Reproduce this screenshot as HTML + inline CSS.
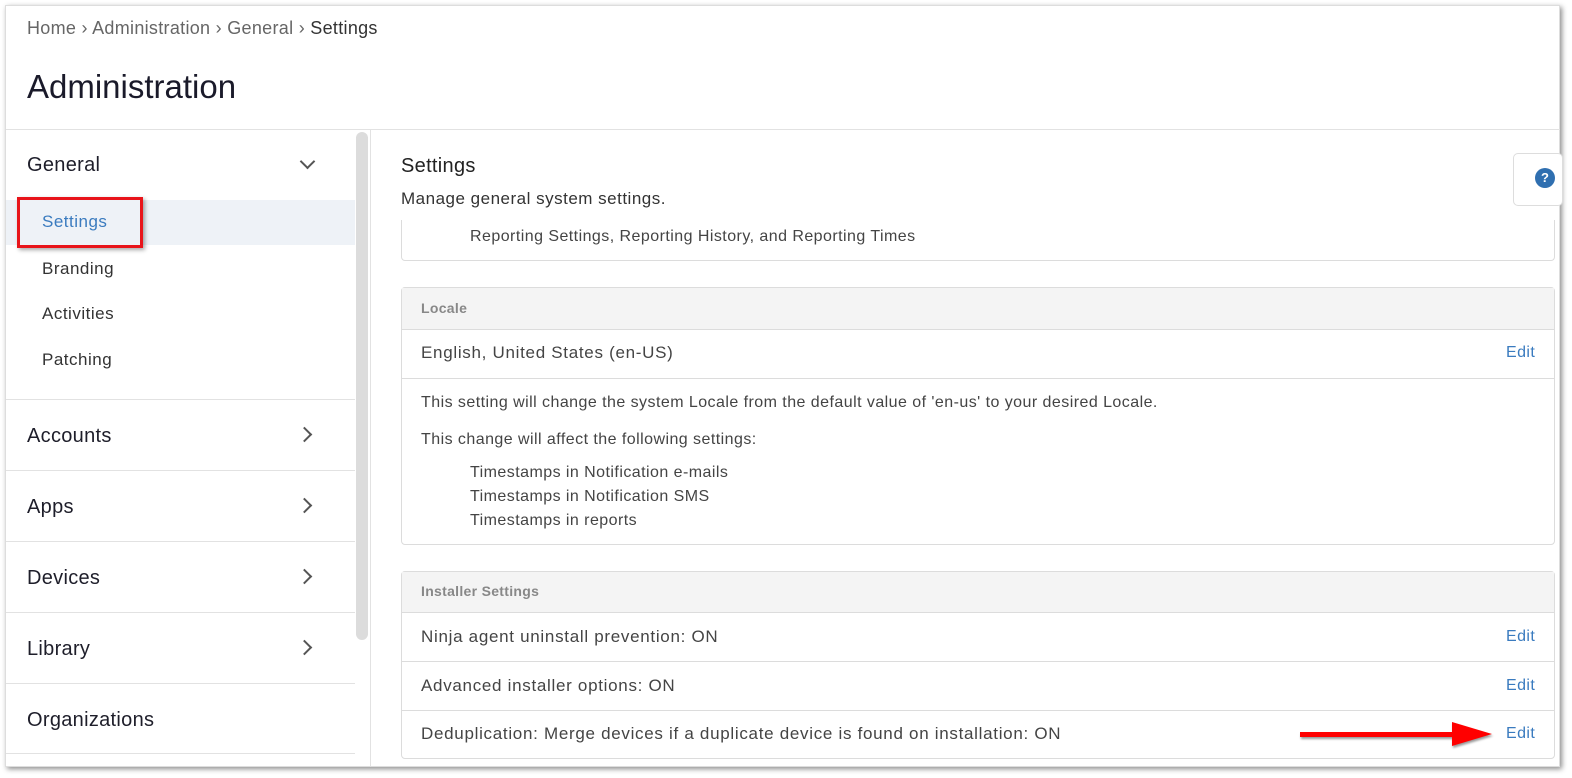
<!DOCTYPE html>
<html><head><style>
*{margin:0;padding:0;box-sizing:border-box}
body{width:1572px;height:778px;background:#fff;position:relative;overflow:hidden;font-family:"Liberation Sans",sans-serif;color:#222}
.a{position:absolute;white-space:nowrap}
.frame{position:absolute;left:5px;top:5px;width:1555px;height:762px;background:#fff;box-shadow:2px 2px 5px rgba(0,0,0,.45);border:1px solid #ddd}
.hl{position:absolute;height:1px;background:#e2e2e2}
.nav{font-size:20px;color:#1e1e2a;letter-spacing:0.3px}
.sub{font-size:17px;color:#333;letter-spacing:0.5px}
.chev{position:absolute;width:11px;height:11px;border-right:2px solid #555;border-bottom:2px solid #555}
.card{position:absolute;left:401px;width:1154px;border:1px solid #dcdcdc;border-radius:4px;background:#fff}
.t{font-size:17px;color:#444;letter-spacing:0.7px}
.s{font-size:16px;color:#444;letter-spacing:0.45px}
.edit{font-size:16px;color:#3a7bbf;letter-spacing:0.4px}
</style></head><body>
<div class="frame"></div>
<div class="a" style="left:27px;top:18px;font-size:18px;color:#666;letter-spacing:0.3px">Home › Administration › General › <span style="color:#333">Settings</span></div>
<div class="a" style="left:27px;top:68px;font-size:33px;color:#1a1a2a">Administration</div>
<div class="hl" style="left:6px;top:129px;width:1554px"></div>

<!-- sidebar -->
<div style="position:absolute;left:6px;top:200px;width:349px;height:45px;background:#eef2f7"></div>
<div style="position:absolute;left:356px;top:132px;width:12px;height:508px;background:#dcdcdc;border-radius:6px"></div>
<div style="position:absolute;left:370px;top:130px;width:1px;height:636px;background:#e2e2e2"></div>
<div class="a nav" style="left:27px;top:154px">General</div>
<div class="chev" style="left:302px;top:156px;transform:rotate(45deg)"></div>
<div class="a sub" style="left:42px;top:212px;color:#3a7bbf">Settings</div>
<div style="position:absolute;left:17px;top:197px;width:126px;height:51px;border:3px solid #e8141a;box-shadow:2px 2px 4px rgba(0,0,0,.35)"></div>
<div class="a sub" style="left:42px;top:259px">Branding</div>
<div class="a sub" style="left:42px;top:304px">Activities</div>
<div class="a sub" style="left:42px;top:350px">Patching</div>
<div class="hl" style="left:6px;top:399px;width:349px"></div>
<div class="a nav" style="left:27px;top:425px">Accounts</div><div class="chev" style="left:299px;top:429px;transform:rotate(-45deg)"></div>
<div class="hl" style="left:6px;top:470px;width:349px"></div>
<div class="a nav" style="left:27px;top:496px">Apps</div><div class="chev" style="left:299px;top:500px;transform:rotate(-45deg)"></div>
<div class="hl" style="left:6px;top:541px;width:349px"></div>
<div class="a nav" style="left:27px;top:567px">Devices</div><div class="chev" style="left:299px;top:571px;transform:rotate(-45deg)"></div>
<div class="hl" style="left:6px;top:612px;width:349px"></div>
<div class="a nav" style="left:27px;top:638px">Library</div><div class="chev" style="left:299px;top:642px;transform:rotate(-45deg)"></div>
<div class="hl" style="left:6px;top:683px;width:349px"></div>
<div class="a nav" style="left:27px;top:709px">Organizations</div>
<div class="hl" style="left:6px;top:753px;width:349px"></div>

<!-- main -->
<div class="a" style="left:401px;top:155px;font-size:20px;color:#222;letter-spacing:0.3px">Settings</div>
<div class="a" style="left:401px;top:189px;font-size:17px;color:#333;letter-spacing:0.5px">Manage general system settings.</div>
<div style="position:absolute;left:1513px;top:153px;width:50px;height:53px;border:1px solid #ddd;border-radius:5px;background:#fff"></div>
<div style="position:absolute;left:1535px;top:168px;width:20px;height:20px;border-radius:50%;background:#2f6fb0;color:#fff;font-weight:bold;font-size:13px;text-align:center;line-height:20px">?</div>

<div class="card" style="top:220px;height:41px;border-top:none;border-radius:0 0 4px 4px"></div>
<div class="a s" style="left:470px;top:228px">Reporting Settings, Reporting History, and Reporting Times</div>

<div class="card" style="top:287px;height:258px"></div>
<div style="position:absolute;left:402px;top:288px;width:1152px;height:42px;background:#f4f4f4;border-bottom:1px solid #dcdcdc"></div>
<div class="a" style="left:421px;top:300px;font-size:14px;font-weight:bold;color:#888;letter-spacing:0.3px">Locale</div>
<div class="a t" style="left:421px;top:343px">English, United States (en-US)</div>
<div class="a edit" style="left:1506px;top:344px">Edit</div>
<div class="hl" style="left:402px;top:378px;width:1152px;background:#dcdcdc"></div>
<div class="a s" style="left:421px;top:394px">This setting will change the system Locale from the default value of 'en-us' to your desired Locale.</div>
<div class="a s" style="left:421px;top:431px">This change will affect the following settings:</div>
<div class="a s" style="left:470px;top:464px">Timestamps in Notification e-mails</div>
<div class="a s" style="left:470px;top:488px">Timestamps in Notification SMS</div>
<div class="a s" style="left:470px;top:512px">Timestamps in reports</div>

<div class="card" style="top:571px;height:188px"></div>
<div style="position:absolute;left:402px;top:572px;width:1152px;height:41px;background:#f4f4f4;border-bottom:1px solid #dcdcdc"></div>
<div class="a" style="left:421px;top:583px;font-size:14px;font-weight:bold;color:#888;letter-spacing:0.3px">Installer Settings</div>
<div class="a t" style="left:421px;top:627px">Ninja agent uninstall prevention: ON</div>
<div class="a edit" style="left:1506px;top:628px">Edit</div>
<div class="hl" style="left:402px;top:661px;width:1152px;background:#dcdcdc"></div>
<div class="a t" style="left:421px;top:676px">Advanced installer options: ON</div>
<div class="a edit" style="left:1506px;top:677px">Edit</div>
<div class="hl" style="left:402px;top:710px;width:1152px;background:#dcdcdc"></div>
<div class="a t" style="left:421px;top:724px">Deduplication: Merge devices if a duplicate device is found on installation: ON</div>
<div class="a edit" style="left:1506px;top:725px">Edit</div>
<svg style="position:absolute;left:1296px;top:720px" width="200" height="32"><g style="filter:drop-shadow(1px 2px 1px rgba(0,0,0,.4))"><rect x="4" y="12" width="155" height="5" fill="#f00"/><polygon points="156,2 196,14 156,26" fill="#f00"/></g></svg>
</body></html>
